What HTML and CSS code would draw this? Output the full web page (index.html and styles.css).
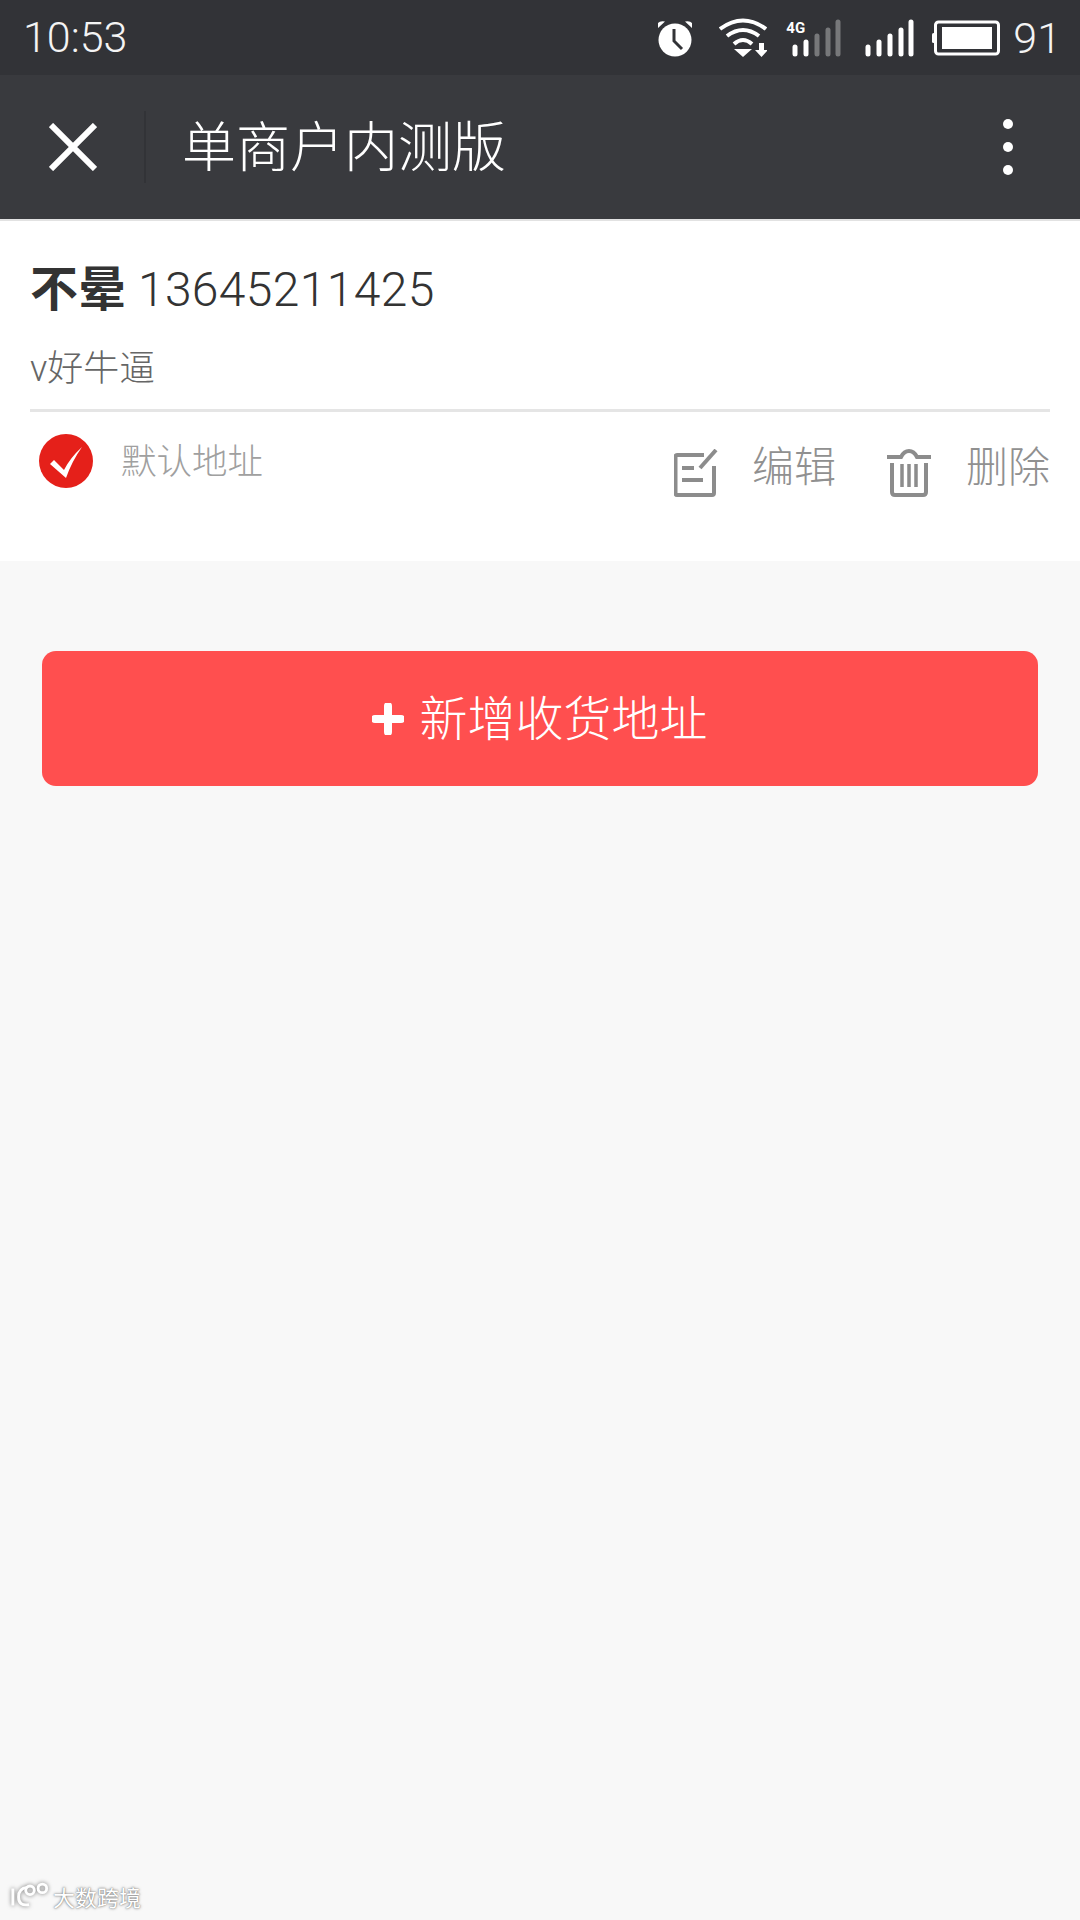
FILE: index.html
```html
<!DOCTYPE html>
<html lang="zh-CN">
<head>
    <meta charset="UTF-8">
    <title>单商户内测版</title>
    <link rel="stylesheet" href="styles.css">
</head>
<body>
<div class="statusbar">
    <span class="clock">10:53</span>
    <div class="status-icons">
        <svg class="ic-alarm" width="36" height="38" viewBox="0 0 36 38">
            <circle cx="18" cy="21" r="16.5" fill="#fff"/>
            <path d="M1 9 L8 2.5 Q3 1.5 1 4 Z M35 9 L28 2.5 Q33 1.5 35 4 Z" fill="#fff"/>
            <path d="M17 10 V22 L25 30" fill="none" stroke="#323337" stroke-width="3"/>
        </svg>
        <svg class="ic-wifi" width="48" height="40" viewBox="0 0 48 40">
            <g fill="none" stroke="#fff" stroke-width="4">
                <path d="M1 11 Q24 -6 47 11"/>
                <path d="M8 18 Q24 6 40 18"/>
                <path d="M15 26 Q24 18 33 26"/>
            </g>
            <path d="M15 31 H33 L24 39 Z" fill="#fff"/>
            <path d="M40 25 H45 V32 H49 L42.500 39 L36 32 H40 Z" fill="#fff"/>
        </svg>
        <div class="sim sim-first">
            <span class="net">4G</span>
            <svg width="50" height="38" viewBox="0 0 50 38">
                <g stroke-width="5" stroke-linecap="round">
                    <path d="M4 28 V35" stroke="#fff"/>
                    <path d="M15 23 V35" stroke="#fff"/>
                    <path d="M26 17 V35" stroke="#77787a"/>
                    <path d="M37 11 V35" stroke="#77787a"/>
                    <path d="M47 3 V35" stroke="#77787a"/>
                </g>
            </svg>
        </div>
        <svg class="ic-signal" width="50" height="38" viewBox="0 0 50 38">
            <g stroke="#fff" stroke-width="5" stroke-linecap="round">
                <path d="M4 28 V35"/>
                <path d="M15 23 V35"/>
                <path d="M26 17 V35"/>
                <path d="M37 11 V35"/>
                <path d="M47 3 V35"/>
            </g>
        </svg>
        <svg class="ic-battery" width="68" height="36" viewBox="0 0 68 36">
            <rect x="3.500" y="2" width="63" height="32" rx="3" fill="none" stroke="#fff" stroke-width="3"/>
            <rect x="10" y="7" width="50" height="22" fill="#fff"/>
            <rect x="0" y="13" width="3" height="10" rx="1.500" fill="#fff"/>
        </svg>
        <span class="level">91</span>
    </div>
</div>

<div class="navbar">
    <svg class="nav-close" width="48" height="48" viewBox="0 0 48 48">
        <path d="M2 2 L46 46 M46 2 L2 46" stroke="#fff" stroke-width="6"/>
    </svg>
    <i class="nav-line"></i>
    <h1 class="nav-title">单商户内测版</h1>
    <div class="nav-more"><i></i><i></i><i></i></div>
</div>

<div class="address-card">
    <div class="person"><b>不晕</b> <span class="phone">13645211425</span></div>
    <div class="address">v好牛逼</div>
    <div class="actions">
        <div class="default-addr">
            <svg width="54" height="54" viewBox="0 0 54 54">
                <circle cx="27" cy="27" r="27" fill="#e5201a"/>
                <path d="M11 30 L15 26 L25 36 Q31 24 43 13 Q33 27 27 44 Z" fill="#fff"/>
            </svg>
            <span>默认地址</span>
        </div>
        <div class="action-btn action-edit">
            <svg width="44" height="48" viewBox="0 0 44 48">
                <path d="M30 6 H3 Q1.500 6 1.500 8 V44 Q1.500 46 3 46 H38 Q40 46 40 44 V17" fill="none" stroke="#8c8c8c" stroke-width="4"/>
                <path d="M8 19 H20 M8 31 H29" stroke="#8c8c8c" stroke-width="4"/>
                <path d="M26 19 L42 1" stroke="#8c8c8c" stroke-width="4"/>
            </svg>
            <span>编辑</span>
        </div>
        <div class="action-btn">
            <svg width="46" height="48" viewBox="0 0 46 48">
                <path d="M1 8 H15 Q18 2 23 2 Q28 2 31 8 H45" fill="none" stroke="#8c8c8c" stroke-width="4"/>
                <path d="M6 14 V43 Q6 46 9 46 H37 Q40 46 40 43 V14" fill="none" stroke="#8c8c8c" stroke-width="4"/>
                <path d="M16 15 V38 M23 15 V38 M30 15 V38" stroke="#8c8c8c" stroke-width="3.500"/>
            </svg>
            <span>删除</span>
        </div>
    </div>
</div>

<div class="add-wrap">
    <a class="add-btn" href="#">
        <svg width="32" height="32" viewBox="0 0 32 32">
            <path d="M16 3 V29 M3 16 H29" stroke="#fff" stroke-width="8" stroke-linecap="round"/>
        </svg>
        <span>新增收货地址</span>
    </a>
</div>

<div class="watermark">
    <svg width="40" height="28" viewBox="0 0 42 28">
        <g fill="none" stroke="#fff" stroke-width="3">
            <path d="M3 6 V24 M18 5 Q9 6 9 15 Q9 25 20 23"/>
            <circle cx="21" cy="8" r="4.500"/>
            <circle cx="34" cy="6" r="4.500"/>
        </g>
    </svg>
    <span>大数跨境</span>
</div>
</body>
</html>
```

FILE: styles.css
```css
*{
    padding: 0;
    margin: 0;
    box-sizing: border-box;
}
html, body{
    width: 1080px;
    height: 1920px;
    background: #f8f8f8;
    font-family: Roboto, "Noto Sans CJK SC", sans-serif;
    overflow: hidden;
}
body{
    position: relative;
}
svg{
    display: block;
    flex-shrink: 0;
}

.statusbar{
    height: 75px;
    background: #323337;
    color: #f4f4f4;
    display: flex;
    align-items: center;
    justify-content: space-between;
    padding: 0 19px 0 23px;
    font-weight: 300;
    font-size: 43px;
}
.clock{
    margin-bottom: 2px;
}
.status-icons{
    display: flex;
    align-items: center;
}
.ic-wifi{
    margin-left: 26px;
}
.sim{
    position: relative;
    margin-left: 24px;
}
.net{
    position: absolute;
    top: 2px;
    left: -5px;
    font-size: 15px;
    font-weight: 700;
    line-height: 15px;
    color: #fff;
}
.ic-signal{
    margin-left: 23px;
}
.ic-battery{
    margin-left: 18px;
}
.level{
    margin-left: 13px;
}

.navbar{
    height: 146px;
    background: #393a3e;
    display: flex;
    align-items: center;
    padding-left: 49px;
    border-bottom: 2px solid #e2e2e2;
}
.nav-line{
    width: 2px;
    height: 72px;
    background: #323337;
    margin-left: 47px;
}
.nav-title{
    flex: 1;
    margin: 0 0 7px 36px;
    font-size: 54px;
    font-weight: 300;
    color: #fff;
}
.nav-more{
    width: 10px;
    margin-right: 67px;
    display: flex;
    flex-direction: column;
    gap: 13px;
}
.nav-more i{
    width: 10px;
    height: 10px;
    border-radius: 50%;
    background: #fff;
}

.address-card{
    height: 340px;
    background: #fff;
    padding: 0 30px;
}
.person{
    padding-top: 39px;
    font-size: 48px;
    line-height: 60px;
    color: #333;
}
.phone{
    font-weight: 300;
    letter-spacing: 0.35px;
}
.address{
    margin-top: 25px;
    padding-bottom: 16px;
    font-size: 36px;
    line-height: 48px;
    color: #666;
    border-bottom: 3px solid #e5e5e5;
    font-weight: 300;
}
.actions{
    display: flex;
    align-items: flex-start;
}
.default-addr{
    flex: 1;
    display: flex;
    align-items: center;
    padding: 21px 0 0 9px;
    font-size: 35.500px;
    font-weight: 300;
    color: #a0a0a0;
}
.default-addr span{
    margin: 0 0 4px 28px;
}
.action-btn{
    display: flex;
    align-items: center;
    padding-top: 37px;
    font-size: 42px;
    font-weight: 300;
    color: #909090;
}
.action-btn span{
    margin-left: 34px;
    line-height: 48px;
    margin-top: -10px;
}
.action-edit{
    margin-right: 50px;
}

.add-wrap{
    padding: 90px 42px 0;
}
.add-btn{
    height: 135px;
    background: #ff4f4f;
    border-radius: 14px;
    display: flex;
    align-items: center;
    justify-content: center;
    color: #fff;
    text-decoration: none;
    font-size: 48px;
    font-weight: 300;
}
.add-btn span{
    margin: 0 0 8px 15px;
}

.watermark{
    position: absolute;
    left: 10px;
    bottom: 8px;
    display: flex;
    align-items: center;
    color: #fff;
    font-size: 22px;
    text-shadow: 0 0 3px #777, 0 0 1px #777;
}
.watermark svg{
    filter: drop-shadow(0 0 2px #777);
}
.watermark span{
    margin-left: 3px;
}
```
